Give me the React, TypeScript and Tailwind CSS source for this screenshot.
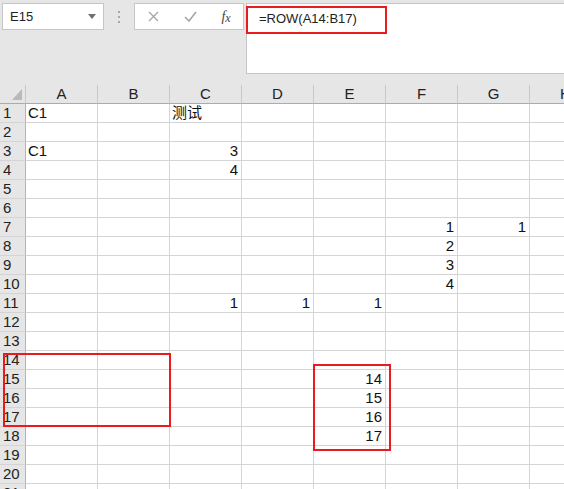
import React from 'react';

const cols = ['A', 'B', 'C', 'D', 'E', 'F', 'G', 'H'];
const rows = Array.from({ length: 21 }, (_, i) => i + 1);

// cell values, numbers are right aligned like in Excel
const data: Record<string, string | number> = {
  A1: 'C1',
  C1: '测试',
  A3: 'C1',
  C3: 3,
  C4: 4,
  F7: 1,
  G7: 1,
  F8: 2,
  F9: 3,
  F10: 4,
  C11: 1,
  D11: 1,
  E11: 1,
  E15: 14,
  E16: 15,
  E17: 16,
  E18: 17,
};

function Toolbar() {
  return (
    <div className="h-[85px] bg-[#e6e6e6] flex items-start pt-[3px]">
      <div className="ml-[2px] w-[102px] h-[27px] bg-white border border-[#c6c6c6] flex items-center pl-[7px] pr-[7px] text-[13px] text-[#222]">
        <span className="flex-1">E15</span>
        <svg width="8" height="5" viewBox="0 0 8 5">
          <path d="M0 0 L8 0 L4 5 Z" fill="#6f6f6f" />
        </svg>
      </div>
      <div className="w-[30px] h-[27px] flex flex-col items-center justify-center gap-[3px]">
        <span className="w-[2px] h-[2px] bg-[#a9a9a9]" />
        <span className="w-[2px] h-[2px] bg-[#a9a9a9]" />
        <span className="w-[2px] h-[2px] bg-[#a9a9a9]" />
      </div>
      <div className="w-[110px] h-[27px] bg-white border border-[#c6c6c6] flex items-center">
        <div className="w-[36px] flex justify-center">
          <svg width="11" height="11" viewBox="0 0 11 11">
            <path d="M1 1 L10 10 M10 1 L1 10" stroke="#a6a6a6" strokeWidth="1.3" fill="none" />
          </svg>
        </div>
        <div className="w-[38px] flex justify-center">
          <svg width="13" height="11" viewBox="0 0 13 11">
            <path d="M1 6 L5 10 L12 1" stroke="#a6a6a6" strokeWidth="1.6" fill="none" />
          </svg>
        </div>
        <div className="w-[34px] flex justify-center text-[14px] italic text-[#444] [font-family:'Liberation_Serif',serif]">
          <span>f</span>
          <span className="text-[12px] mt-[3px]">x</span>
        </div>
      </div>
      <div className="ml-[2px] flex-1 h-[71px] bg-white border border-[#c6c6c6] border-r-0 pl-[12px] pt-[7px] text-[13px] leading-[16px] text-[#222]">
        =ROW(A14:B17)
      </div>
    </div>
  );
}

function Sheet() {
  return (
    <div className="grid grid-cols-[26px_repeat(8,72px)] text-[15px] leading-[15px] text-[#111]">
      <div className="h-[19px] bg-[#e6e6e6] border-r border-b border-r-[#c8c8c8] border-b-[#ababab] flex items-end justify-end pr-[3px] pb-[3px]">
        <svg width="10" height="11" viewBox="0 0 10 11">
          <path d="M10 0 L10 11 L0 11 Z" fill="#b9b9b9" />
        </svg>
      </div>
      {cols.map((c) => (
        <div
          key={c}
          className="h-[19px] bg-[#e6e6e6] border-r border-b border-r-[#c8c8c8] border-b-[#ababab] flex items-end justify-center pb-[2px] text-[#222]"
        >
          {c}
        </div>
      ))}
      {rows.map((r) => (
        <React.Fragment key={r}>
          <div className="h-[19px] bg-[#e6e6e6] border-r border-b border-r-[#b4b4b4] border-b-[#d4d4d4] flex items-end pl-[3px] pb-[2px] text-[#222]">
            {r}
          </div>
          {cols.map((c) => {
            const v = data[c + r];
            const num = typeof v === 'number';
            return (
              <div
                key={c}
                className={
                  'h-[19px] bg-white border-r border-b border-[#d4d4d4] flex items-end pb-[2px] whitespace-nowrap overflow-hidden ' +
                  (num ? 'justify-end pr-[3px]' : 'pl-[2px]')
                }
              >
                {v !== undefined ? String(v) : ''}
              </div>
            );
          })}
        </React.Fragment>
      ))}
    </div>
  );
}

export default function App() {
  return (
    <div className="relative w-[564px] h-[489px] overflow-hidden bg-white [font-family:'Liberation_Sans','Noto_Sans_CJK_SC',sans-serif]">
      <Toolbar />
      <Sheet />
      {/* red annotation boxes */}
      <div className="absolute left-[246px] top-[6px] w-[141px] h-[28px] border-2 border-[#e81c1f]" />
      <div className="absolute left-[3px] top-[353px] w-[168px] h-[74px] border-2 border-[#e81c1f]" />
      <div className="absolute left-[313px] top-[364px] w-[78px] h-[87px] border-2 border-[#e81c1f]" />
    </div>
  );
}
